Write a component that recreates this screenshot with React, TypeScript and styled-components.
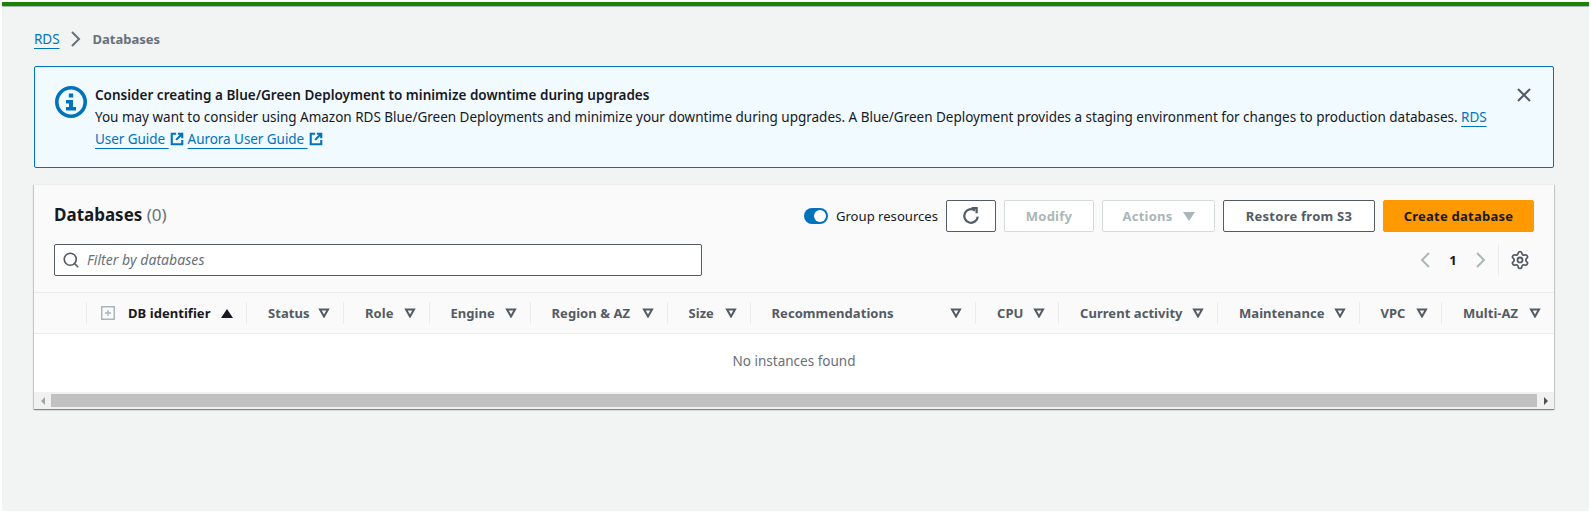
import { FC } from "react";
import styled, { createGlobalStyle } from "styled-components";
import { Search, Settings } from "lucide-react";

const GlobalStyle = createGlobalStyle`
  html, body {
    margin: 0;
    background: #fff;
  }
  body {
    font-family: "Noto Sans", "Open Sans", sans-serif;
    font-size: 13.5px;
    line-height: 22px;
    color: #16191f;
  }
`;

const Frame = styled.div`
  margin: 2px;
  height: 509px;
  background: #f2f3f3;
  overflow: hidden;
`;

const TopBar = styled.div`
  height: 4px;
  background: #1d8102;
  border-bottom: 1px solid #aab7b8;
`;

const Content = styled.main`
  padding: 21px 35px 0 32px;
`;

const Breadcrumbs = styled.nav`
  display: flex;
  align-items: center;
  height: 22px;
  margin-bottom: 16px;
`;

const Link = styled.a`
  color: #0073bb;
  letter-spacing: -0.05px;
  text-decoration: underline;
  text-underline-offset: 4px;
  text-decoration-thickness: 1px;
`;

const Crumb = styled.span`
  font-weight: 700;
  font-size: 13px;
  color: #687078;
`;

const CrumbChevron = styled.svg`
  width: 12px;
  height: 18px;
  margin: 0 11px 0 10px;
  fill: none;
  stroke: #687078;
  stroke-width: 2;
`;

const Alert = styled.section`
  display: flex;
  align-items: flex-start;
  height: 102px;
  box-sizing: border-box;
  padding: 17px 21px 17px 20px;
  background: #f1faff;
  border: 1px solid #0073bb;
  border-radius: 2px;
  margin-bottom: 16px;
`;

const AlertIcon = styled.svg`
  flex: none;
  width: 32px;
  height: 32px;
  margin: 2px 8px 0 0;
`;

const AlertBody = styled.div`
  flex: 1;
  padding-right: 18px;
  letter-spacing: -0.012px;
`;

const AlertTitle = styled.div`
  font-weight: 600;
  font-size: 13.5px;
  letter-spacing: 0.01px;
`;

const ExternalIcon = styled.svg`
  width: 14px;
  height: 14px;
  margin: 0 4px 0 1px;
  vertical-align: -2px;
  fill: none;
  stroke: #0073bb;
  stroke-width: 2.4;
`;

const CloseIcon = styled.svg`
  flex: none;
  width: 16px;
  height: 16px;
  margin-top: 3px;
  fill: none;
  stroke: #545b64;
  stroke-width: 2;
`;

const Card = styled.section`
  background: #fff;
  box-shadow: 0 1px 1px 0 rgba(0, 28, 36, 0.3), 1px 1px 1px 0 rgba(0, 28, 36, 0.15),
    -1px 1px 1px 0 rgba(0, 28, 36, 0.15);
  border-top: 1px solid #eaeded;
`;

const CardHeader = styled.header`
  background: #fafafa;
  padding: 15px 20px 16px 20px;
`;

const HeaderRow = styled.div`
  display: flex;
  justify-content: space-between;
  align-items: center;
  height: 32px;

  & + & {
    margin-top: 12px;
  }
`;

const Title = styled.h1`
  margin: -2px 0 0;
  font-size: 17px;
  font-weight: 700;
  line-height: 30px;
`;

const Count = styled.span`
  font-weight: 400;
  color: #687078;
`;

const Actions = styled.div`
  display: flex;
  align-items: center;
  gap: 8px;
`;

const ToggleLabel = styled.label`
  display: flex;
  align-items: center;
  gap: 8px;
  font-size: 13.1px;
`;

const Toggle = styled.span`
  display: flex;
  justify-content: flex-end;
  align-items: center;
  width: 24px;
  height: 16px;
  padding: 2px;
  box-sizing: border-box;
  border-radius: 8px;
  background: #0073bb;

  &::after {
    content: "";
    width: 12px;
    height: 12px;
    border-radius: 50%;
    background: #fff;
  }
`;

type IButton = {
  $width: number;
  $variant?: "normal" | "disabled" | "primary";
};

const Button = styled.button<IButton>`
  display: flex;
  justify-content: center;
  align-items: center;
  gap: 10px;
  width: ${(p) => p.$width}px;
  height: 32px;
  padding: 0;
  border-radius: 2px;
  font: 700 13px "Noto Sans", sans-serif;
  letter-spacing: 0.25px;
  border: 1px solid
    ${(p) =>
      p.$variant === "disabled"
        ? "#d5dbdb"
        : p.$variant === "primary"
          ? "#ff9900"
          : "#545b64"};
  color: ${(p) =>
    p.$variant === "disabled"
      ? "#aab7b8"
      : p.$variant === "primary"
        ? "#16191f"
        : "#545b64"};
  background: ${(p) => (p.$variant === "primary" ? "#ff9900" : "#fff")};
`;

const RefreshIcon = styled.svg`
  width: 18px;
  height: 18px;
  fill: none;
  stroke: #545b64;
  stroke-width: 2;
`;

const DownCaret = styled.span`
  width: 0;
  height: 0;
  border-left: 6px solid transparent;
  border-right: 6px solid transparent;
  border-top: 9px solid #aab7b8;
`;

const InputBox = styled.div`
  display: flex;
  align-items: center;
  gap: 7px;
  width: 648px;
  height: 32px;
  box-sizing: border-box;
  padding-left: 7px;
  background: #fff;
  border: 1px solid #545b64;
  border-radius: 2px;
  color: #687078;

  svg {
    flex: none;
  }
`;

const Placeholder = styled.span`
  font-style: italic;
  font-size: 14px;
  letter-spacing: 0.05px;
  color: #687078;
`;

const Pager = styled.div`
  display: flex;
  align-items: center;
  height: 32px;
`;

const PageCell = styled.span`
  display: flex;
  justify-content: center;
  align-items: center;
  width: 28px;
  font-weight: 700;
  font-size: 13px;
  color: #16191f;
`;

const PagerChevron = styled.svg`
  width: 12px;
  height: 18px;
  fill: none;
  stroke: #aab7b8;
  stroke-width: 2;
`;

const PagerDivider = styled.span`
  width: 1px;
  height: 32px;
  margin: 0 7px 0 3px;
  background: #eaeded;
`;

const ColumnsRow = styled.div`
  display: flex;
  align-items: center;
  height: 40px;
  background: #fafafa;
  border-top: 1px solid #eaeded;
  border-bottom: 1px solid #eaeded;
`;

type IColumn = {
  $width: number;
  $active?: boolean;
};

const Column = styled.div<IColumn>`
  display: flex;
  align-items: center;
  justify-content: space-between;
  flex: none;
  width: ${(p) => p.$width}px;
  height: 22px;
  box-sizing: border-box;
  padding: 0 13px 0 21px;
  border-right: 1px solid #eaeded;
  font-weight: 700;
  font-size: 13px;
  letter-spacing: 0.05px;
  color: ${(p) => (p.$active ? "#16191f" : "#545b64")};

  &:last-child {
    border-right: none;
  }
`;

const ColumnName = styled.span`
  white-space: nowrap;
`;

const Expander = styled.svg`
  flex: none;
  width: 14px;
  height: 14px;
  margin: 0 13px 0 -7px;
`;

const FilterIcon = styled.svg`
  flex: none;
  width: 12px;
  height: 10px;
  fill: none;
  stroke: #545b64;
  stroke-width: 2;
`;

const SortIcon = styled.span`
  flex: none;
  width: 0;
  height: 0;
  margin-left: auto;
  border-left: 6px solid transparent;
  border-right: 6px solid transparent;
  border-bottom: 9px solid #16191f;
`;

const EmptyRow = styled.div`
  display: flex;
  justify-content: center;
  height: 58px;
  padding-top: 16px;
  box-sizing: border-box;
  font-size: 13.5px;
  color: #687078;
`;

const ScrollBar = styled.div`
  display: flex;
  align-items: center;
  height: 17px;
  background: #f1f1f1;
`;

const ScrollThumb = styled.div`
  flex: 1;
  height: 13px;
  background: #c1c1c1;
`;

const ScrollArrow = styled.span<{ $dir: "left" | "right" }>`
  display: flex;
  justify-content: center;
  align-items: center;
  flex: none;
  width: 17px;

  &::after {
    content: "";
    border-top: 4px solid transparent;
    border-bottom: 4px solid transparent;
    ${(p) =>
      p.$dir === "left"
        ? "border-right: 4px solid #a3a3a3;"
        : "border-left: 4px solid #505050;"}
  }
`;

const columns = [
  { name: "Status", width: 97 },
  { name: "Role", width: 85.5 },
  { name: "Engine", width: 101 },
  { name: "Region & AZ", width: 137 },
  { name: "Size", width: 83 },
  { name: "Recommendations", width: 225.5 },
  { name: "CPU", width: 83 },
  { name: "Current activity", width: 159 },
  { name: "Maintenance", width: 141.5 },
  { name: "VPC", width: 82.5 },
  { name: "Multi-AZ", width: 112 },
];

const External: FC = () => (
  <ExternalIcon viewBox="0 0 16 16">
    <path d="M7 2H2v12h12V9" />
    <path d="M9 2h5v5M14 2L7 9" />
  </ExternalIcon>
);

const App: FC = () => {
  return (
    <Frame>
      <GlobalStyle />
      <TopBar />
      <Content>
        <Breadcrumbs>
          <Link>RDS</Link>
          <CrumbChevron viewBox="0 0 12 18">
            <path d="M2 2l7 7-7 7" />
          </CrumbChevron>
          <Crumb>Databases</Crumb>
        </Breadcrumbs>

        <Alert>
          <AlertIcon viewBox="0 0 32 32">
            <circle cx="16" cy="16" r="14.2" fill="none" stroke="#0073bb" strokeWidth="3.6" />
            <rect x="13.8" y="7.5" width="4.4" height="4" fill="#0073bb" />
            <path d="M11 14h7v7h3v3.5H11V21h3v-3.5h-3z" fill="#0073bb" />
          </AlertIcon>
          <AlertBody>
            <AlertTitle>Consider creating a Blue/Green Deployment to minimize downtime during upgrades</AlertTitle>
            You may want to consider using Amazon RDS Blue/Green Deployments and minimize your downtime during
            upgrades. A Blue/Green Deployment provides a staging environment for changes to production databases.{" "}
            <Link>RDS User Guide </Link>
            <External />
            <Link>Aurora User Guide </Link>
            <External />
          </AlertBody>
          <CloseIcon viewBox="0 0 16 16">
            <path d="M2 2l12 12M14 2L2 14" />
          </CloseIcon>
        </Alert>

        <Card>
          <CardHeader>
            <HeaderRow>
              <Title>
                Databases <Count>(0)</Count>
              </Title>
              <Actions>
                <ToggleLabel>
                  <Toggle />
                  Group resources
                </ToggleLabel>
                <Button $width={50}>
                  <RefreshIcon viewBox="0 0 16 16">
                    <path d="M14 8.5A6 6 0 1 1 11.6 3.2" />
                    <path d="M8.5 1H13v4.5" />
                  </RefreshIcon>
                </Button>
                <Button $width={90} $variant="disabled">
                  Modify
                </Button>
                <Button $width={113} $variant="disabled">
                  Actions
                  <DownCaret />
                </Button>
                <Button $width={152}>Restore from S3</Button>
                <Button $width={151} $variant="primary">
                  Create database
                </Button>
              </Actions>
            </HeaderRow>
            <HeaderRow>
              <InputBox>
                <Search size={18} strokeWidth={2.2} color="#545b64" />
                <Placeholder>Filter by databases</Placeholder>
              </InputBox>
              <Pager>
                <PageCell>
                  <PagerChevron viewBox="0 0 12 18">
                    <path d="M10 2L3 9l7 7" />
                  </PagerChevron>
                </PageCell>
                <PageCell>1</PageCell>
                <PageCell>
                  <PagerChevron viewBox="0 0 12 18">
                    <path d="M2 2l7 7-7 7" />
                  </PagerChevron>
                </PageCell>
                <PagerDivider />
                <PageCell>
                  <Settings size={20} strokeWidth={2.1} color="#545b64" />
                </PageCell>
              </Pager>
            </HeaderRow>
          </CardHeader>

          <ColumnsRow>
            <Column $width={53} />
            <Column $width={160} $active>
              <Expander viewBox="0 0 14 14">
                <rect x="0.75" y="0.75" width="12.5" height="12.5" fill="none" stroke="#aab7b8" strokeWidth="1.5" />
                <path d="M7 4v6M4 7h6" stroke="#aab7b8" strokeWidth="1.4" />
              </Expander>
              <ColumnName>DB identifier</ColumnName>
              <SortIcon />
            </Column>
            {columns.map((col) => (
              <Column key={col.name} $width={col.width}>
                <ColumnName>{col.name}</ColumnName>
                <FilterIcon viewBox="0 0 12 10">
                  <path d="M2 1.5h8L6 8.5z" />
                </FilterIcon>
              </Column>
            ))}
          </ColumnsRow>

          <EmptyRow>No instances found</EmptyRow>

          <ScrollBar>
            <ScrollArrow $dir="left" />
            <ScrollThumb />
            <ScrollArrow $dir="right" />
          </ScrollBar>
        </Card>
      </Content>
    </Frame>
  );
};

export default App;
